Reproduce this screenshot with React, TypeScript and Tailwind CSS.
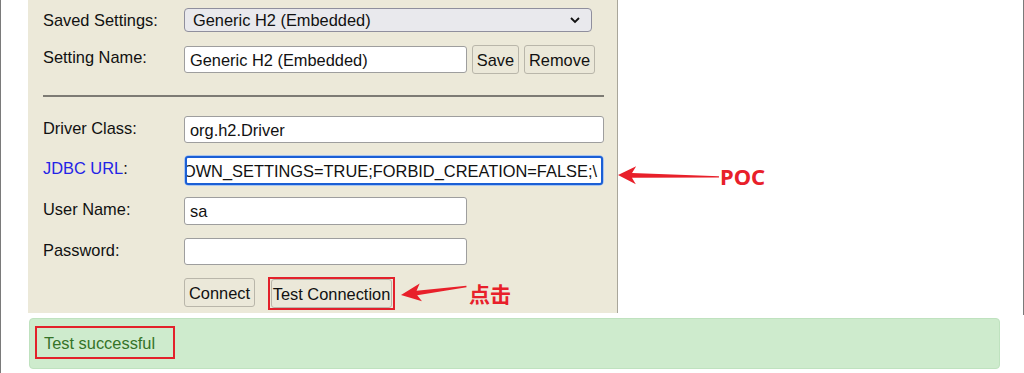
import React from 'react';

const labelCls = 'w-[141px] shrink-0 pt-[3px] leading-[18px] whitespace-nowrap';
const inputCls = 'h-[27px] bg-white border border-[#9e9e9e] rounded-[3px] pl-[5px] flex items-center leading-[18px] whitespace-nowrap overflow-hidden';
const btnCls = 'h-[29px] bg-[#ebe8d9] border border-[#b9b6aa] rounded-[3px] flex items-center justify-center leading-[18px] whitespace-nowrap';

export default function App() {
  return (
    <div className="relative w-[1024px] h-[373px] bg-white overflow-hidden border-l border-[#7a7a7a] font-['Liberation_Sans',Arial,sans-serif] text-[16.4px] text-[#111]">
      {/* top area */}
      <div className="flex h-[315px] border-r border-[#7a7a7a]">
        <div className="ml-[27px] w-[590px] h-[313px] bg-[#ece9d9] border-r border-[#a9a69a] pl-[15px] pt-[8px] flex flex-col">
          {/* saved settings */}
          <div className="flex items-start h-[24px]">
            <div className={labelCls + ' pt-[1px]'}>Saved Settings:</div>
            <div className="w-[408px] h-[24px] bg-[#e9e9ed] border border-[#8f8f9d] rounded-[4px] pl-[8px] pr-[10px] flex items-center justify-between leading-[18px]">
              <span>Generic H2 (Embedded)</span>
              <svg width="12" height="8" viewBox="0 0 12 8">
                <path d="M2 2 L6 6 L10 2" stroke="#111" strokeWidth="1.8" fill="none" />
              </svg>
            </div>
          </div>

          {/* setting name */}
          <div className="flex items-start mt-[13px] h-[29px]">
            <div className={labelCls + ' pt-[2px]'}>Setting Name:</div>
            <div className={inputCls + ' w-[283px] mt-[1px]'}>Generic H2 (Embedded)</div>
            <div className={btnCls + ' w-[47px] ml-[5px]'}>Save</div>
            <div className={btnCls + ' w-[71px] ml-[5px]'}>Remove</div>
          </div>

          <div className="mt-[21px] w-[561px] h-[2px] bg-[#7d7b74]" />

          {/* driver */}
          <div className="flex items-start mt-[19px]">
            <div className={labelCls + ' pt-[2px]'}>Driver Class:</div>
            <div className={inputCls + ' w-[420px]'}>org.h2.Driver</div>
          </div>

          {/* jdbc */}
          <div className="flex items-start mt-[12px]">
            <div className={labelCls + ' pt-[4px]'}>
              <span className="text-[#2323e6]">JDBC URL</span><span>:</span>
            </div>
            <div className="w-[420px] h-[31px] p-[1px] bg-[#a9c5ee] rounded-[5px]">
              <div className="h-full bg-white border-2 border-[#1b5fd5] rounded-[3px] pr-[3px] flex items-center justify-end overflow-hidden whitespace-nowrap leading-[18px]">
                <span>jdbc:h2:mem:test;IGNORE_UNKNOWN_SETTINGS=TRUE;FORBID_CREATION=FALSE;\</span>
                <span className="inline-block w-[1px] h-[18px] bg-black ml-[1px]" />
              </div>
            </div>
          </div>

          {/* user */}
          <div className="flex items-start mt-[11px]">
            <div className={labelCls + ' pt-[3px]'}>User Name:</div>
            <div className={inputCls + ' w-[283px] h-[28px]'}>sa</div>
          </div>

          {/* password */}
          <div className="flex items-start mt-[13px]">
            <div className={labelCls + ' pt-[2px]'}>Password:</div>
            <div className={inputCls + ' w-[283px]'}></div>
          </div>

          {/* buttons */}
          <div className="flex items-start mt-[12px]">
            <div className="w-[141px] shrink-0" />
            <div className={btnCls + ' w-[71px] mt-[1px]'}>Connect</div>
            <div className="ml-[13px] w-[127px] h-[33px] border-2 border-[#e3212b] flex items-center justify-center">
              <div className={btnCls + ' w-[121px]'}>Test Connection</div>
            </div>
          </div>
        </div>
      </div>

      {/* result */}
      <div className="mt-[3px] ml-[28px] w-[971px] h-[51px] bg-[#ceebcd] border border-[#bfe2bf] rounded-[4px] pl-[5px] pt-[7px]">
        <div className="w-[140px] h-[33px] border-[2.5px] border-[#e3212b] pl-[7px] flex items-center text-[#357328] leading-[18px] whitespace-nowrap">
          Test successful
        </div>
      </div>

      {/* annotations */}
      <svg className="absolute left-0 top-0 pointer-events-none" width="1024" height="373" viewBox="0 0 1024 373">
        <g transform="translate(617,175) rotate(1)">
          <polygon points="0,0 18,-9 14,-2.2 101,-0.6 101,0.8 14,2.4 18,9" fill="#e8202a" />
        </g>
        <g transform="translate(400,295) rotate(-7.5)">
          <polygon points="0,0 20,-9 16,-2.2 66,-0.7 66,0.9 16,2.4 20,9" fill="#e8202a" />
        </g>
      </svg>
      <div className="absolute left-[719px] top-[161px] text-[22px] leading-[30px] font-bold text-[#e8202a] font-['Noto_Sans',sans-serif]">
        POC
      </div>
      <div className="absolute left-[468px] top-[279px] text-[21px] leading-[28px] font-bold text-[#e8202a] font-['Noto_Sans_CJK_SC',sans-serif]">
        点击
      </div>
    </div>
  );
}
